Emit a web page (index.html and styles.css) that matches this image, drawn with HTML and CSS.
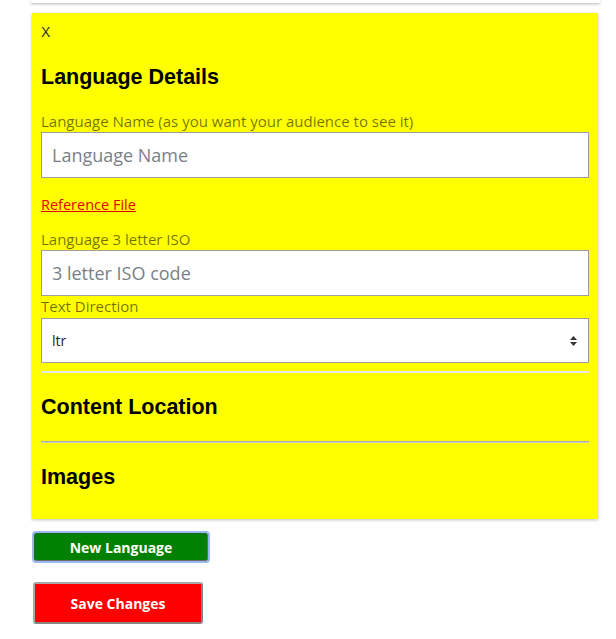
FILE: index.html
```html
<!DOCTYPE html>
<html>
<head>
<meta charset="utf-8">
<link rel="stylesheet" href="styles.css">
</head>
<body>
<div class="page">
  <div class="top-card"></div>
  <div class="lang-card">
    <div class="close">X</div>
    <h2 class="section-title">Language Details</h2>
    <label class="field-label">Language Name (as you want your audience to see it)</label>
    <input class="text-input" type="text" placeholder="Language Name">
    <div class="ref-row"><a class="ref-link" href="#">Reference File</a></div>
    <label class="field-label">Language 3 letter ISO</label>
    <input class="text-input" type="text" placeholder="3 letter ISO code">
    <label class="field-label">Text Direction</label>
    <div class="select-wrap">
      <select class="select-input">
        <option>ltr</option>
        <option>rtl</option>
      </select>
      <svg class="select-arrow" width="7" height="10" viewBox="0 0 7 10"><path d="M3.5 0 L7 4 L0 4 Z M0 6 L7 6 L3.5 10 Z" fill="#333"/></svg>
    </div>
    <hr class="rule rule-light">
    <h2 class="section-title">Content Location</h2>
    <hr class="rule rule-dark">
    <h2 class="section-title">Images</h2>
  </div>
  <button class="btn btn-new">New Language</button>
  <button class="btn btn-save">Save Changes</button>
</div>
</body>
</html>
```
FILE: styles.css
```css
html, body {
  margin: 0;
  padding: 0;
  background: #fff;
}
body {
  font-family: "Open Sans", "Liberation Sans", sans-serif;
  font-size: 14px;
}
.page {
  margin-left: 32px;
  width: 566px;
  display: flex;
  flex-direction: column;
  align-items: flex-start;
}
.top-card {
  align-self: stretch;
  height: 3px;
  margin-left: -1px;
  margin-right: -2px;
  background: #fff;
  box-shadow: 0 1px 3px rgba(0, 0, 0, 0.3);
  margin-bottom: 10px;
}
.lang-card {
  align-self: stretch;
  display: block;
  background: #ffff00;
  padding: 9px 9px 8px;
  box-shadow: 0 1px 3px rgba(0, 0, 0, 0.25);
}
.close {
  font-family: "Liberation Sans", Arial, sans-serif;
  font-size: 14px;
  line-height: 21px;
  color: #333;
}
.section-title {
  font-family: "Liberation Sans", Arial, sans-serif;
  font-size: 21.5px;
  font-weight: bold;
  color: #000;
  margin: 22px 0 21px;
  line-height: 25px;
}
.field-label {
  display: block;
  font-size: 15px;
  line-height: 21px;
  color: rgba(0, 0, 0, 0.56);
}
.text-input {
  display: block;
  box-sizing: border-box;
  width: 100%;
  height: 46px;
  border: 1px solid #9e9e9e;
  padding: 0 10px;
  font-family: "Open Sans", sans-serif;
  font-size: 18px;
  color: #333;
  background: #fff;
  outline: none;
  margin: 0;
}
.text-input::placeholder {
  color: #7a7f87;
}
.ref-row {
  margin: 16px 0 14px;
  line-height: 21px;
}
.ref-link {
  color: #e6000a;
  text-decoration: underline;
  font-size: 14.5px;
}
.select-wrap {
  position: relative;
  margin-top: 1px;
}
.select-input {
  display: block;
  width: 100%;
  box-sizing: border-box;
  height: 45px;
  border: 1px solid #9e9e9e;
  border-radius: 0;
  background: #fff;
  padding: 0 10px;
  font-family: "Open Sans", sans-serif;
  font-size: 14px;
  color: #222;
  appearance: none;
  -webkit-appearance: none;
  margin: 0;
}
.select-arrow {
  position: absolute;
  right: 12px;
  top: 18px;
  pointer-events: none;
}
.rule {
  height: 0;
  border: none;
  margin: 8px 0 0;
}
.rule-light {
  border-top: 2px solid #e8e8e8;
}
.rule-dark {
  border-top: 1px solid #a8a8a8;
  border-bottom: 1px solid #d0d0d0;
}
.btn {
  font-family: "Open Sans", sans-serif;
  font-weight: bold;
  font-size: 14px;
  color: #fff;
  cursor: pointer;
  padding: 0;
}
.btn-new {
  width: 174px;
  height: 28px;
  margin-top: 14px;
  margin-left: 2px;
  background: #008000;
  border: 1px solid #1a6a1a;
  border-right-color: #6b6b6b;
  border-bottom-color: #6b6b6b;
  border-radius: 2px;
  outline: 2px solid #9ab9f2;
  outline-offset: 0;
}
.btn-save {
  width: 170px;
  height: 42px;
  margin-top: 21px;
  margin-left: 1px;
  background: #ff0000;
  border: 2px solid #a9a9a9;
  border-right-color: #858585;
  border-bottom-color: #858585;
  border-radius: 3px;
}
```
